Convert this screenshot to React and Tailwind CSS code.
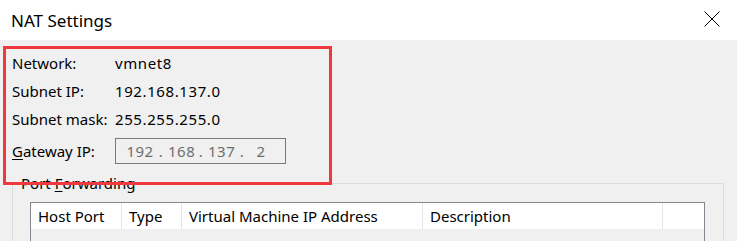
import React from 'react';

const rows = [
  { label: 'Network:', value: 'vmnet8' },
  { label: 'Subnet IP:', value: '192.168.137.0' },
  { label: 'Subnet mask:', value: '255.255.255.0' },
];

const columns = [
  { title: 'Host Port', w: 'w-[91px]' },
  { title: 'Type', w: 'w-[60px]' },
  { title: 'Virtual Machine IP Address', w: 'w-[241px]' },
  { title: 'Description', w: 'w-[240px]' },
];

export default function App() {
  return (
    <div className="relative w-[737px] h-[241px] overflow-hidden bg-[#f0f0f0] text-black font-['Noto_Sans',sans-serif]">
      {/* title bar */}
      <div className="h-[40px] bg-white flex items-center justify-between pl-[11px] pr-[17px]">
        <span className="text-[17px] leading-none">NAT Settings</span>
        <svg width="16" height="16" viewBox="0 0 16 16" className="mb-[2px]">
          <path d="M0.5 0.5 L15.5 15.5 M15.5 0.5 L0.5 15.5" stroke="#000" strokeWidth="1" fill="none" />
        </svg>
      </div>

      <div className="pt-[9px] pl-[12px] text-[15px]">
        {rows.map(r => (
          <div key={r.label} className="flex items-center h-[28px]">
            <span className="w-[103px]">{r.label}</span>
            <span className="tracking-[0.6px]">{r.value}</span>
          </div>
        ))}
        <div className="flex items-center h-[26px] mt-[5px]">
          <span className="w-[103px]"><span className="underline underline-offset-2">G</span>ateway IP:</span>
          <div className="w-[171px] h-[26px] border border-[#7a7a7a] flex items-center pl-[10px] text-[#6d6d6d] tracking-[0.5px]">
            <span className="w-[28px] text-center">192</span>
            <span className="w-[14px] text-center">.</span>
            <span className="w-[26px] text-center">168</span>
            <span className="w-[14px] text-center">.</span>
            <span className="w-[27px] text-center">137</span>
            <span className="w-[14px] text-center">.</span>
            <span className="w-[24px] text-center">2</span>
          </div>
        </div>
      </div>

      {/* port forwarding group */}
      <fieldset className="ml-[12px] mt-[9px] w-[712px] border border-[#dcdcdc] text-[15px]">
        <legend className="ml-[7px] px-[1px] leading-[20px]">
          Port <span className="underline underline-offset-2">F</span>orwarding
        </legend>
        <div className="pt-[9px] pl-[17px] pr-[18px] pb-[20px]">
          <div className="border border-[#828790] h-[80px] bg-[#f0f0f0]">
            <div className="flex h-[26px] bg-white">
              {columns.map(c => (
                <div key={c.title} className={`${c.w} shrink-0 border-r border-[#e5e5e5] pl-[7px] flex items-center`}>
                  {c.title}
                </div>
              ))}
            </div>
          </div>
        </div>
      </fieldset>

      {/* red annotation box */}
      <div className="absolute left-[3px] top-[46px] w-[329px] h-[139px] border-[3px] border-[#f0393f] pointer-events-none" />
    </div>
  );
}
